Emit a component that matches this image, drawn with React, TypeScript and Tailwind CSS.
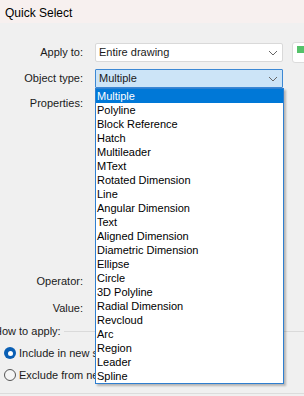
import React from 'react';

const items = [
  'Multiple',
  'Polyline',
  'Block Reference',
  'Hatch',
  'Multileader',
  'MText',
  'Rotated Dimension',
  'Line',
  'Angular Dimension',
  'Text',
  'Aligned Dimension',
  'Diametric Dimension',
  'Ellipse',
  'Circle',
  '3D Polyline',
  'Radial Dimension',
  'Revcloud',
  'Arc',
  'Region',
  'Leader',
  'Spline',
];

const Chevron: React.FC = () => (
  <svg width="10" height="6" viewBox="0 0 10 6" className="shrink-0">
    <path d="M1 1 L5 5 L9 1" fill="none" stroke="#666" strokeWidth="1" />
  </svg>
);

const Row: React.FC<{ label: string; className?: string; children?: React.ReactNode }> = ({ label, className, children }) => (
  <div className={`flex items-center ${className ?? ''}`}>
    <div className="w-[84px] text-right pr-[1px] shrink-0">{label}</div>
    <div className="ml-[11px] flex-1 flex items-center">{children}</div>
  </div>
);

const App: React.FC = () => {
  return (
    <div
      className="relative w-[304px] h-[396px] overflow-hidden bg-[#f0f0f0] text-[11px] text-[#1a1a1a]"
      style={{ fontFamily: '"Liberation Sans", Arial, sans-serif' }}
    >
      <div className="h-[23px] bg-[#f7f0ef] pl-[5px] pt-[4px] text-[12px] text-black">Quick Select</div>

      <div className="pt-[20px]">
        <Row label="Apply to:" className="h-[19px]">
          <div className="w-[188px] h-[19px] bg-white border border-[#d9d9d9] rounded-[2px] flex items-center justify-between pl-[3px] pr-[4px]">
            <span>Entire drawing</span>
            <Chevron />
          </div>
          <div className="ml-[9px] w-[20px] h-[21px] bg-white border border-[#dcdcdc] rounded-[3px] flex items-start pl-[4px] pt-[3px]">
            <div className="w-[10px] h-[7px] bg-[#55c26a]" />
          </div>
        </Row>

        <Row label="Object type:" className="h-[19px] mt-[7px]">
          <div className="w-[188px] h-[19px] bg-[#cce4f7] border border-[#3c88d4] rounded-[1px] flex items-center justify-between pl-[3px] pr-[4px]">
            <span>Multiple</span>
            <Chevron />
          </div>
        </Row>

        <Row label="Properties:" className="h-[16px] mt-[7px]" />

        <Row label="Operator:" className="h-[16px] mt-[162px]" />
        <Row label="Value:" className="h-[16px] mt-[11px]" />

        <div className="flex items-center mt-[7px] h-[16px] -ml-[6px]">
          <span className="whitespace-nowrap">How to apply:</span>
          <div className="flex-1 h-px bg-[#dadada] ml-[3px]" />
        </div>

        <div className="flex items-center mt-[6px] h-[16px] pl-[4px]">
          <div className="w-[12px] h-[12px] rounded-full bg-[#0a5fb4] flex items-center justify-center">
            <div className="w-[5px] h-[5px] rounded-full bg-white" />
          </div>
          <span className="ml-[3px] whitespace-nowrap">Include in new selection set</span>
        </div>

        <div className="flex items-center mt-[6px] h-[16px] pl-[4px]">
          <div className="w-[12px] h-[12px] rounded-full border border-[#555] bg-[#f5f5f5]" />
          <span className="ml-[3px] whitespace-nowrap">Exclude from new selection set</span>
        </div>

        <div className="mt-[10px] h-px bg-[#dcdcdc]" />
      </div>

      <div className="absolute left-[95px] top-[88px] w-[189px] bg-white border border-[#2f7fd0] shadow-[2px_2px_2px_rgba(0,0,0,0.25)]">
        {items.map((it, i) => (
          <div
            key={it}
            className={`h-[14px] leading-[14px] pl-[1px] whitespace-nowrap ${i === 0 ? 'bg-[#0078d7] text-white' : 'text-black'}`}
          >
            {it}
          </div>
        ))}
      </div>
    </div>
  );
};

export default App;
